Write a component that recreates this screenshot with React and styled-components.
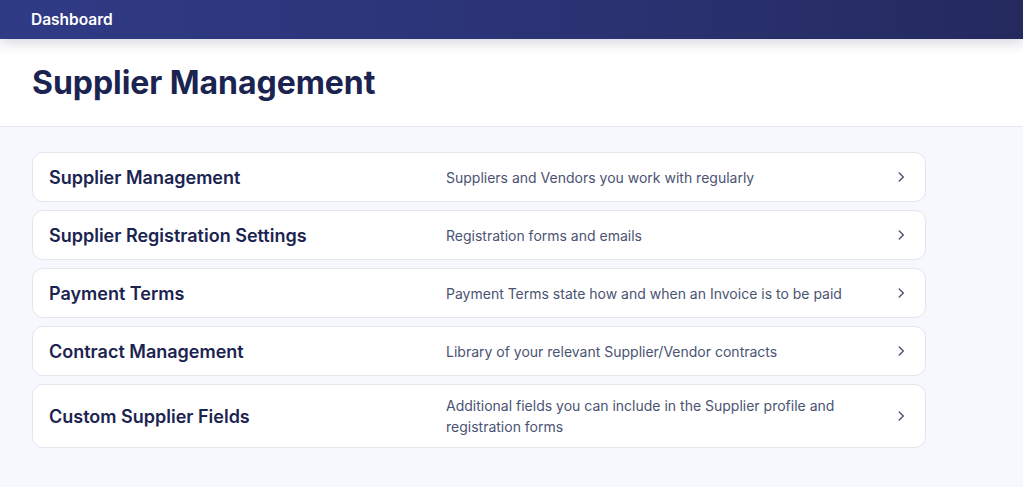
import React from 'react';
import styled, { createGlobalStyle } from 'styled-components';

const GlobalStyle = createGlobalStyle`
  html, body {
    margin: 0;
    padding: 0;
    background: #f7f8fd;
    font-family: Inter, "Noto Sans", sans-serif;
    -webkit-font-smoothing: antialiased;
  }
`;

const Page = styled.div`
  min-height: 487px;
  background: #f7f8fd;
`;

const TopBar = styled.header`
  height: 39px;
  display: flex;
  align-items: center;
  padding: 0 31px;
  background: linear-gradient(90deg, #303b86 0%, #2a3272 60%, #242a5e 100%);
  box-shadow: 0 4px 12px rgba(30, 35, 80, 0.18);
  position: relative;
  z-index: 2;
`;

const TopLink = styled.span`
  color: #ffffff;
  font-size: 15.5px;
  font-weight: 600;
`;

const TitleBar = styled.div`
  height: 88px;
  background: #ffffff;
  border-bottom: 1px solid #e6e8f0;
  display: flex;
  align-items: center;
  padding: 0 32px;
  box-sizing: border-box;
`;

const Title = styled.h1`
  margin: 0;
  font-size: 32px;
  font-weight: 700;
  color: #1b2450;
  letter-spacing: -0.05px;
  padding-bottom: 1px;
`;

const List = styled.div`
  display: flex;
  flex-direction: column;
  gap: 8px;
  padding: 25px 32px;
  width: 894px;
`;

const Card = styled.div`
  display: grid;
  grid-template-columns: 397px 1fr 24px;
  align-items: center;
  min-height: ${(p) => (p.$tall ? '64px' : '50px')};
  padding: 0 17px 0 16px;
  background: #ffffff;
  border: 1px solid #e4e6ee;
  border-radius: 11px;
  box-sizing: border-box;
  cursor: pointer;
`;

const ItemTitle = styled.div`
  font-size: 18px;
  font-weight: 600;
  color: #1b2450;
`;

const ItemDesc = styled.div`
  font-size: 14px;
  line-height: 21px;
  color: #4b5372;
  padding-right: 30px;
`;

const Chevron = styled.svg`
  justify-self: end;
  width: 14px;
  height: 14px;
  color: #4b5372;
`;

const items = [
  { title: 'Supplier Management', desc: 'Suppliers and Vendors you work with regularly' },
  { title: 'Supplier Registration Settings', desc: 'Registration forms and emails' },
  { title: 'Payment Terms', desc: 'Payment Terms state how and when an Invoice is to be paid' },
  { title: 'Contract Management', desc: 'Library of your relevant Supplier/Vendor contracts' },
  {
    title: 'Custom Supplier Fields',
    desc: 'Additional fields you can include in the Supplier profile and registration forms',
    tall: true,
  },
];

const App = () => (
  <Page>
    <GlobalStyle />
    <TopBar>
      <TopLink>Dashboard</TopLink>
    </TopBar>
    <TitleBar>
      <Title>Supplier Management</Title>
    </TitleBar>
    <List>
      {items.map((item) => (
        <Card key={item.title} $tall={item.tall}>
          <ItemTitle>{item.title}</ItemTitle>
          <ItemDesc>{item.desc}</ItemDesc>
          <Chevron viewBox="0 0 24 24" fill="none" stroke="currentColor" strokeWidth="2.4" strokeLinecap="round" strokeLinejoin="round">
            <path d="M9 5l7 7-7 7" />
          </Chevron>
        </Card>
      ))}
    </List>
  </Page>
);

export default App;
